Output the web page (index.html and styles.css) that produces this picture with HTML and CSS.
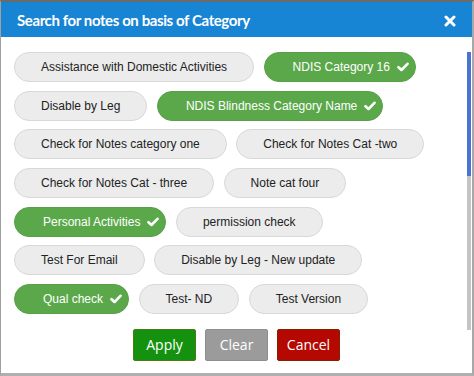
FILE: index.html
```html
<!DOCTYPE html>
<html lang="en">
<head>
    <meta charset="UTF-8">
    <title>Search for notes on basis of Category</title>
    <link rel="stylesheet" href="styles.css">
</head>
<body>
    <div class="dialog">
        <header class="header">
            <h1>Search for notes on basis of Category</h1>
            <button class="close" aria-label="Close">
                <svg width="12" height="12" viewBox="0 0 12 12">
                    <path d="M2 2 L10 10 M10 2 L2 10" stroke="#fff" stroke-width="3" stroke-linecap="round"/>
                </svg>
            </button>
        </header>

        <div class="body">
            <div class="content">
                <div class="chips">
                    <span class="chip">Assistance with Domestic Activities</span>
                    <span class="chip on">NDIS Category 16 <svg class="tick" viewBox="0 0 12 10"><path d="M1.5 5.2 L4.5 8 L10.5 1.8" fill="none" stroke="#fff" stroke-width="2.6" stroke-linecap="round" stroke-linejoin="round"/></svg></span>
                    <span class="chip">Disable by Leg</span>
                    <span class="chip on">NDIS Blindness Category Name <svg class="tick" viewBox="0 0 12 10"><path d="M1.5 5.2 L4.5 8 L10.5 1.8" fill="none" stroke="#fff" stroke-width="2.6" stroke-linecap="round" stroke-linejoin="round"/></svg></span>
                    <span class="chip">Check for Notes category one</span>
                    <span class="chip">Check for Notes Cat -two</span>
                    <span class="chip">Check for Notes Cat - three</span>
                    <span class="chip">Note cat four</span>
                    <span class="chip on">Personal Activities <svg class="tick" viewBox="0 0 12 10"><path d="M1.5 5.2 L4.5 8 L10.5 1.8" fill="none" stroke="#fff" stroke-width="2.6" stroke-linecap="round" stroke-linejoin="round"/></svg></span>
                    <span class="chip">permission check</span>
                    <span class="chip">Test For Email</span>
                    <span class="chip">Disable by Leg - New update</span>
                    <span class="chip on">Qual check <svg class="tick" viewBox="0 0 12 10"><path d="M1.5 5.2 L4.5 8 L10.5 1.8" fill="none" stroke="#fff" stroke-width="2.6" stroke-linecap="round" stroke-linejoin="round"/></svg></span>
                    <span class="chip">Test- ND</span>
                    <span class="chip">Test Version</span>
                </div>

                <div class="actions">
                    <button class="btn apply">Apply</button>
                    <button class="btn clear">Clear</button>
                    <button class="btn cancel">Cancel</button>
                </div>
            </div>
            <div class="scrollbar"><div class="thumb"></div></div>
        </div>
    </div>
</body>
</html>
```

FILE: styles.css
```css
* {
    margin: 0;
    padding: 0;
    box-sizing: border-box;
}

body {
    background: #fff;
    font-family: 'Liberation Sans', Arial, sans-serif;
}

.dialog {
    width: 474px;
    height: 376px;
    border-top: 2px solid #6b6b6b;
    border-left: 1px solid #a0a0a0;
    border-right: 2px solid #a8a8a8;
    border-bottom: 3px solid #b0b0b0;
    background: #fff;
}

.header {
    height: 35px;
    background: #1784d4;
    display: flex;
    align-items: center;
    justify-content: space-between;
    padding: 0 16px 0 16px;
}

.header h1 {
    color: #fff;
    font-family: Lato, sans-serif;
    font-size: 15px;
    font-weight: 700;
    letter-spacing: -0.4px;
}

.close {
    background: none;
    border: none;
    display: flex;
    margin-top: 2px;
}

.body {
    display: flex;
    padding-top: 15px;
}

.content {
    flex: 1;
    padding-left: 13px;
}

.chips {
    display: flex;
    flex-wrap: wrap;
    gap: 8.67px 9.5px;
    padding-right: 30px;
}

.chip {
    display: inline-flex;
    align-items: center;
    height: 30px;
    padding: 0 26px;
    border: 1px solid #d8d8d8;
    border-radius: 15px;
    background: #ececec;
    color: #222;
    font-size: 12px;
}

.chip.on {
    background: #5ba84b;
    border-color: #58a048;
    color: #fff;
    padding: 0 6px 0 28px;
}

.tick {
    width: 12px;
    height: 10px;
    margin-left: 7px;
}

.actions {
    display: flex;
    justify-content: center;
    gap: 9px;
    margin-top: 15px;
    margin-left: -13px;
    padding-left: 5px;
}

.btn {
    width: 63px;
    height: 32px;
    border-radius: 2px;
    color: #fff;
    font-family: 'Open Sans', sans-serif;
    font-size: 14px;
}

.apply {
    background: #14920f;
    border: 1px solid #4a7c12;
}

.clear {
    background: #9b9b9b;
    border: 1px solid #8e8e8e;
}

.cancel {
    background: #b40800;
    border: 1px solid #7e2200;
}

.scrollbar {
    width: 4px;
    height: 278px;
    margin-right: 1px;
    background: #c4c4c4;
}

.thumb {
    height: 124px;
    background: #4a72d2;
}
```
